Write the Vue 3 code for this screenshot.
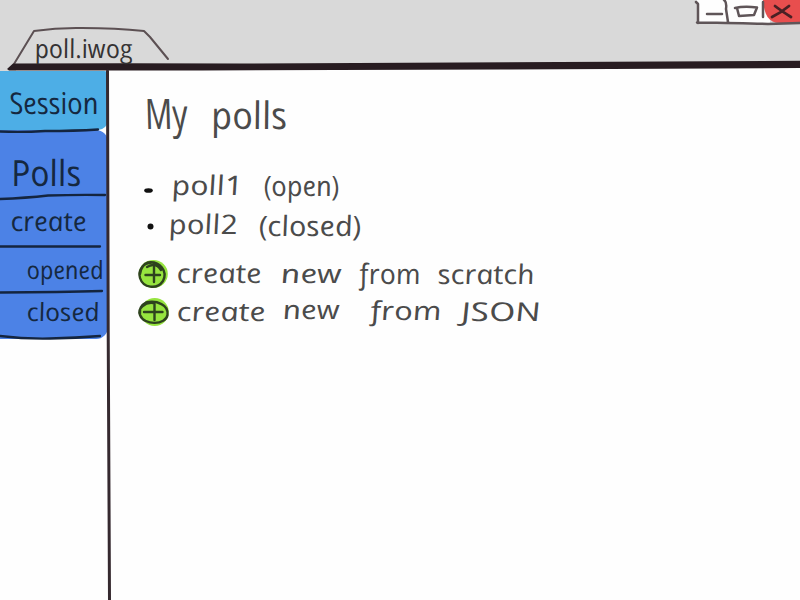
<script setup>
// Each word keeps its own hand-lettered place: x, baseline, width, size
const tab = [{ t: 'poll.iwog', x: 36, y: 58, w: 98, s: 26 }]

const menu = [
  { name: 'session', h: 60, words: [{ t: 'Session', x: 11, y: 43, w: 89, s: 30 }], line: 'M0 60.500Q22 61.500 45 60Q75 60 98 58.500' },
  { name: 'polls', h: 66, words: [{ t: 'Polls', x: 13, y: 55, w: 70, s: 36 }], line: 'M0 68Q26 67 48 64.500Q76 63.500 105 64' },
  { name: 'create', h: 50, words: [{ t: 'create', x: 12, y: 34, w: 76, s: 27 }], line: 'M0 49.500H100' },
  { name: 'opened', h: 45, words: [{ t: 'opened', x: 28, y: 32, w: 77, s: 25 }], line: 'M0 45.500Q62 45 102 44' },
  { name: 'closed', h: 47, words: [{ t: 'closed', x: 28, y: 29, w: 73, s: 25 }], line: 'M0 44Q24 47 50 46.500T100 44' },
]

const title = [
  { t: 'My', x: 147, y: 57, w: 43, s: 42 },
  { t: 'polls', x: 213, y: 57, w: 76, s: 38 },
].map((w) => ({ ...w, x: w.x - 110 }))

const polls = [
  { h: 38, dot: [38.500, 19.500, 4.300, 2.300], words: [{ t: 'poll1', x: 63, y: 24, w: 71, s: 27 }, { t: '(open)', x: 155, y: 25, w: 76, s: 28 }] },
  { h: 40, dot: [40.500, 17.500, 3, 3], words: [{ t: 'poll2', x: 60, y: 25, w: 69, s: 27 }, { t: '(closed)', x: 150, y: 27, w: 103, s: 28 }] },
]

const actions = [
  {
    h: 38,
    disc: [43.300, 25, 14.500, 14],
    ring: 'M42 13.500C32 14 28 22 30 29C33 39 47 41 53 32C58 22 50 12 38 13.500Q31 16 30 25M37 18Q46 13 51 21',
    plus: 'M44 18V33M35.500 26H50',
    words: [
      { t: 'create', x: 68, y: 34, w: 85, s: 27 },
      { t: 'new', x: 172, y: 34, w: 61, s: 26 },
      { t: 'from', x: 251, y: 35, w: 61, s: 28 },
      { t: 'scratch', x: 329, y: 35, w: 97, s: 27 },
    ],
  },
  {
    h: 40,
    disc: [44.700, 25, 14, 14],
    ring: 'M43 16C35 15 27 22 30 28C34 39 56 38 57.500 28C59 18 47 13 36 15.500Q29 19 30 27',
    plus: 'M44.500 17V33M34 25H52.500',
    words: [
      { t: 'create', x: 68, y: 34, w: 89, s: 26 },
      { t: 'new', x: 174, y: 32, w: 57, s: 26 },
      { t: 'from', x: 262, y: 33, w: 71, s: 26 },
      { t: 'JSON', x: 352, y: 34, w: 80, s: 26 },
    ],
  },
]

const pose = (w) => `translate(${w.x} ${w.y}) skewX(11)`
</script>

<template>
  <div class="window">
    <header class="topbar">
      <svg class="art" width="800" height="71" viewBox="0 0 800 71">
        <path class="shade" d="M0 60H16V71H0Z" />
        <path class="tab-line" d="M14 64L34 31Q58 27.500 82 28Q116 28 144 31L150 37L168 59" />
        <path class="rule" d="M7 69L13 63.500Q120 63 240 63.500L800 60.800V68L500 69.500L200 70.500H9Z" />
        <text v-for="w in tab" :key="w.t" class="ink" :transform="pose(w)" :font-size="w.s" :textLength="w.w" lengthAdjust="spacingAndGlyphs">{{ w.t }}</text>
        <path class="white" d="M697 0H770V23H697Z" />
        <path class="red" d="M763 0H800V23H782C769 24 764 15 763 0Z" />
        <path class="control" d="M696 2L698 4V23M697 22.500Q742 23 768 24L800 23M724 0Q727 2 726 9L728 22M707 14H722M735 8Q744 6 757 7.500L754 15L739 16L737 8M763 2V17" />
        <path class="cross" d="M772 17Q782 12 789 6M775 6Q780 10 791 17" />
      </svg>
    </header>

    <div class="body">
      <nav class="sidebar">
        <a v-for="item in menu" :key="item.name" class="item" :class="item.name">
          <svg class="art" width="110" :height="item.h">
            <text v-for="w in item.words" :key="w.t" class="ink" :transform="pose(w)" :font-size="w.s" :textLength="w.w" lengthAdjust="spacingAndGlyphs">{{ w.t }}</text>
            <path class="separator" :d="item.line" />
          </svg>
        </a>
      </nav>

      <svg class="divider" width="4" height="529" viewBox="0 0 4 529">
        <path d="M1.500 0Q2 150 2.200 260T3.500 529" />
      </svg>

      <main class="content">
        <h1>
          <svg class="art" width="600" height="99">
            <text v-for="w in title" :key="w.t" class="ink" :transform="pose(w)" :font-size="w.s" :textLength="w.w" lengthAdjust="spacingAndGlyphs">{{ w.t }}</text>
          </svg>
        </h1>
        <ul>
          <li v-for="(row, i) in polls" :key="i">
            <svg class="art" width="600" :height="row.h">
              <ellipse class="dot" :cx="row.dot[0]" :cy="row.dot[1]" :rx="row.dot[2]" :ry="row.dot[3]" />
              <text v-for="w in row.words" :key="w.t" class="ink" :transform="pose(w)" :font-size="w.s" :textLength="w.w" lengthAdjust="spacingAndGlyphs">{{ w.t }}</text>
            </svg>
          </li>
          <li v-for="(row, i) in actions" :key="'a' + i">
            <svg class="art" width="600" :height="row.h">
              <ellipse class="green" :cx="row.disc[0]" :cy="row.disc[1]" :rx="row.disc[2]" :ry="row.disc[3]" />
              <path class="ring" :d="row.ring" />
              <path class="ring" :d="row.plus" />
              <text v-for="w in row.words" :key="w.t" class="ink" :transform="pose(w)" :font-size="w.s" :textLength="w.w" lengthAdjust="spacingAndGlyphs">{{ w.t }}</text>
            </svg>
          </li>
        </ul>
      </main>
    </div>
  </div>
</template>

<style>
body {
  background: #fefefe;
}
</style>

<style scoped>
.window {
  width: 800px;
  height: 600px;
  overflow: hidden;
  display: flex;
  flex-direction: column;
  background: #fefefe;
}
.topbar {
  height: 71px;
  flex: none;
  background: linear-gradient(#d9d9d9 66px, #fefefe 66px);
}
.art {
  display: block;
  overflow: visible;
}
.art path,
.divider path {
  fill: none;
  stroke-linecap: round;
  stroke-linejoin: round;
}
.ink {
  font-family: "Open Sans", "Noto Sans", sans-serif;
  font-style: italic;
  font-weight: 400;
  fill: #4b4b4b;
}
.topbar .ink {
  fill: #343233;
}
.sidebar .ink {
  fill: #152840;
}
.art .shade {
  fill: #d9d9d9;
}
.art .tab-line {
  stroke: #5c5053;
  stroke-width: 2;
}
.art .rule {
  fill: #281c21;
}
.art .white {
  fill: #fefefe;
}
.art .red {
  fill: #e84e4e;
}
.art .control {
  stroke: #5f5558;
  stroke-width: 2.500;
}
.art .cross {
  stroke: #4a2024;
  stroke-width: 2.800;
}
.body {
  flex: 1;
  display: flex;
}
.sidebar {
  width: 106px;
  flex: none;
}
.item {
  display: block;
  width: 108px;
  background: #4c82e6;
}
.session {
  background: #4daee6;
  border-radius: 0 4px 10px 0;
  height: 59px;
}
.polls {
  padding-top: 1px;
  border-radius: 0 12px 0 0;
}
.closed {
  border-radius: 0 0 12px 0;
}
.art .separator {
  stroke: #14253f;
  stroke-width: 2.300;
}
.divider {
  flex: none;
  position: relative;
  overflow: visible;
}
.divider path {
  stroke: #35292f;
  stroke-width: 3;
}
.content {
  flex: 1;
}
h1,
ul {
  margin: 0;
  padding: 0;
  list-style: none;
}
h1 {
  padding-top: 1px;
}
.dot {
  fill: #111;
}
.green {
  fill: #96e43f;
}
.art .ring {
  stroke: #2e431e;
  stroke-width: 2.400;
}
</style>
